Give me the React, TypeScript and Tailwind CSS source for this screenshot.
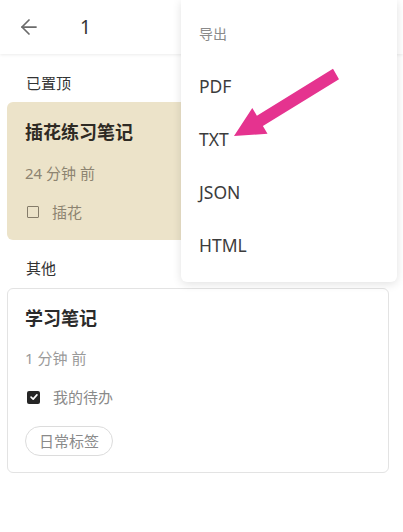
import React from 'react';
import { ArrowLeft } from 'lucide-react';

const formats = ['PDF', 'TXT', 'JSON', 'HTML'];

export default function App() {
  return (
    <div className="relative w-[403px] h-[532px] bg-white overflow-hidden text-[#2b2b2b] font-['Noto_Sans','Noto_Sans_CJK_SC',sans-serif]">
      {/* Header */}
      <div className="h-[54px] flex items-center bg-white shadow-[0_1px_3px_rgba(0,0,0,0.08)]">
        <ArrowLeft className="ml-[17px] w-[24px] h-[24px] text-[#6b6b6b]" strokeWidth={1.75} />
        <span className="ml-[39px] text-[19px] text-[#333]">1</span>
      </div>

      {/* Pinned */}
      <div className="pt-[19px] pl-[26px] h-[20px] leading-[20px] text-[15px] text-[#333] box-content">已置顶</div>
      <div className="mx-[7px] mt-[9px] rounded-[6px] bg-[#ece3c9] pt-[17px] pb-[18px] px-[18px] flex flex-col">
        <div className="h-[26px] leading-[26px] text-[18px] font-bold text-[#2e2a24]">插花练习笔记</div>
        <div className="mt-[18px] h-[20px] leading-[20px] text-[15px] text-[#8d8471]">24 分钟 前</div>
        <div className="mt-[19px] h-[20px] flex items-center gap-[13px] text-[15px] text-[#8d8471]">
          <span className="ml-[2px] w-[12px] h-[12px] border-[1.5px] border-[#857c6a] rounded-[1px]" />
          <span>插花</span>
        </div>
      </div>

      {/* Others */}
      <div className="mt-[18px] pl-[26px] h-[20px] leading-[20px] text-[15px] text-[#333]">其他</div>
      <div className="mx-[7px] w-[382px] mt-[10px] rounded-[6px] border border-[#e3e3e3] pt-[16px] pb-[16px] px-[17px] flex flex-col items-start">
        <div className="h-[26px] leading-[26px] text-[18px] font-bold text-[#2b2b2b]">学习笔记</div>
        <div className="mt-[17px] h-[20px] leading-[20px] text-[15px] text-[#9a9a9a]">1 分钟 前</div>
        <div className="mt-[19px] h-[20px] flex items-center gap-[13px] text-[15px] text-[#8a8a8a]">
          <span className="ml-[2px] w-[13px] h-[13px] rounded-[2px] bg-[#262626] flex items-center justify-center">
            <svg viewBox="0 0 12 12" className="w-[10px] h-[10px]" fill="none" stroke="white" strokeWidth="2" strokeLinecap="round" strokeLinejoin="round">
              <polyline points="2.5 6.2 5 8.5 9.5 3.5" />
            </svg>
          </span>
          <span>我的待办</span>
        </div>
        <div className="mt-[19px] inline-flex items-center h-[30px] px-[13px] rounded-full border border-[#dcdcdc] text-[15px] text-[#8a8a8a]">日常标签</div>
      </div>

      {/* Export menu */}
      <div className="absolute top-0 left-[181px] w-[216px] pt-[7px] pb-[10px] px-[18px] flex flex-col bg-white rounded-b-[6px] shadow-[0_2px_10px_rgba(0,0,0,0.12)] z-10">
        <div className="h-[53px] flex items-center text-[14px] text-[#8a8a8a]">导出</div>
        {formats.map((f) => (
          <div key={f} className="h-[53px] flex items-center text-[17.5px] text-[#3c3c3c]">{f}</div>
        ))}
      </div>

      {/* Annotation arrow */}
      <svg className="absolute inset-0 w-[403px] h-[532px] z-20 pointer-events-none" viewBox="0 0 403 532">
        <polygon
          fill="#e5338f"
          points="339,79.2 262.9,126.1 267.5,133.8 234,136 252.3,108 256.9,115.7 333,68.8"
        />
      </svg>
    </div>
  );
}
